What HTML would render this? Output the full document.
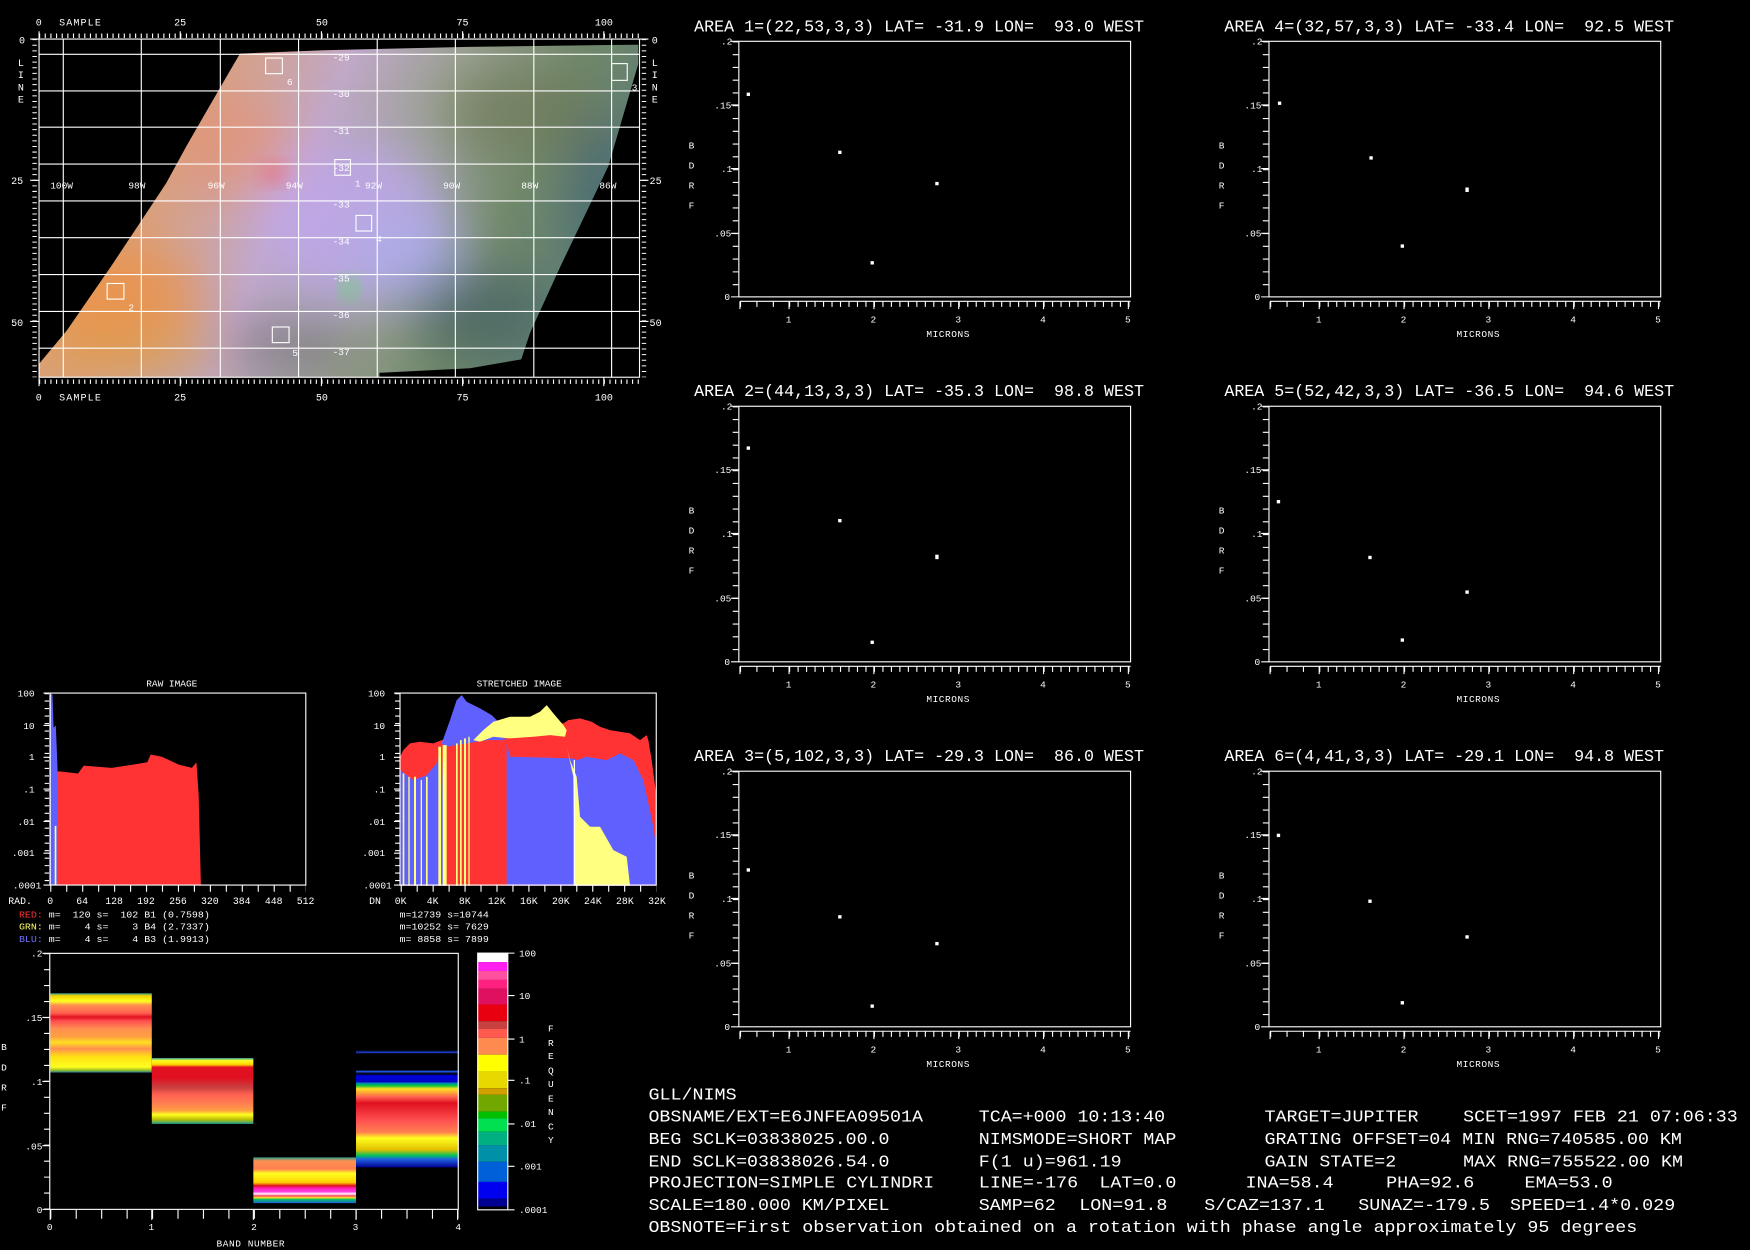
<!DOCTYPE html>
<html><head><meta charset="utf-8"><style>
html,body{margin:0;padding:0;background:#000;}
svg{display:block}
text{font-family:"Liberation Mono","DejaVu Sans Mono",monospace;fill:#fff;white-space:pre}
</style></head><body>
<svg width="1750" height="1250" viewBox="0 0 1568 1120" xmlns="http://www.w3.org/2000/svg">
<rect width="1568" height="1120" fill="#000"/>
<defs>
 <clipPath id="mapclip"><polygon points="35,338 35,326 60,296 100,238 149,164 167,131 197,79 215,48 290,45 420,42 572,40 572,57 545,149 502,239 475,298 467,322 421,330 340,334 340,338"/></clipPath>
 <filter id="bl" x="-30%" y="-30%" width="160%" height="160%"><feGaussianBlur stdDeviation="22"/></filter>
 <filter id="bl2" x="-30%" y="-30%" width="160%" height="160%"><feGaussianBlur stdDeviation="8"/></filter>
 <linearGradient id="mbase" x1="0" y1="0" x2="1" y2="0.25">
  <stop offset="0" stop-color="#e4a060"/><stop offset="0.3" stop-color="#d8a080"/>
  <stop offset="0.5" stop-color="#c0a8c8"/><stop offset="0.68" stop-color="#98a090"/>
  <stop offset="0.85" stop-color="#70886a"/><stop offset="1" stop-color="#607e74"/>
 </linearGradient>
 <linearGradient id="b0" x1="0" y1="0" x2="0" y2="1">
  <stop offset="0" stop-color="#30a090"/><stop offset="0.03" stop-color="#f0d000"/><stop offset="0.1" stop-color="#ffff20"/>
  <stop offset="0.15" stop-color="#ff9050"/><stop offset="0.25" stop-color="#ff6050"/><stop offset="0.3" stop-color="#e01020"/>
  <stop offset="0.35" stop-color="#ff5050"/><stop offset="0.45" stop-color="#ff9050"/><stop offset="0.55" stop-color="#ffa040"/>
  <stop offset="0.62" stop-color="#ffe020"/><stop offset="0.7" stop-color="#ff9050"/><stop offset="0.8" stop-color="#ffe010"/>
  <stop offset="0.93" stop-color="#ffff20"/><stop offset="0.97" stop-color="#a0c020"/><stop offset="1" stop-color="#2080a0"/>
 </linearGradient>
 <linearGradient id="b1" x1="0" y1="0" x2="0" y2="1">
  <stop offset="0" stop-color="#30a0a0"/><stop offset="0.04" stop-color="#ffff20"/><stop offset="0.1" stop-color="#ffd000"/>
  <stop offset="0.14" stop-color="#e01020"/><stop offset="0.3" stop-color="#e01020"/><stop offset="0.45" stop-color="#c84040"/>
  <stop offset="0.55" stop-color="#ff6050"/><stop offset="0.7" stop-color="#ff8050"/><stop offset="0.8" stop-color="#ffa040"/>
  <stop offset="0.86" stop-color="#ffff20"/><stop offset="0.93" stop-color="#c0c000"/><stop offset="1" stop-color="#20a090"/>
 </linearGradient>
 <linearGradient id="b2" x1="0" y1="0" x2="0" y2="1">
  <stop offset="0" stop-color="#20a090"/><stop offset="0.08" stop-color="#ff9050"/><stop offset="0.25" stop-color="#ff8050"/>
  <stop offset="0.35" stop-color="#ffff20"/><stop offset="0.55" stop-color="#ffd000"/><stop offset="0.62" stop-color="#e01020"/>
  <stop offset="0.68" stop-color="#ff20c0"/><stop offset="0.75" stop-color="#ff40e0"/><stop offset="0.8" stop-color="#ffffff"/>
  <stop offset="0.84" stop-color="#ff4060"/><stop offset="0.88" stop-color="#ffe020"/><stop offset="0.92" stop-color="#00c060"/>
  <stop offset="1" stop-color="#2060e0"/>
 </linearGradient>
 <linearGradient id="b3" x1="0" y1="0" x2="0" y2="1">
  <stop offset="0" stop-color="#000"/><stop offset="0.02" stop-color="#2040e0"/><stop offset="0.03" stop-color="#000"/>
  <stop offset="0.17" stop-color="#000"/><stop offset="0.18" stop-color="#2060ff"/><stop offset="0.2" stop-color="#000"/>
  <stop offset="0.22" stop-color="#0000e0"/><stop offset="0.27" stop-color="#0000c0"/><stop offset="0.28" stop-color="#0080c0"/>
  <stop offset="0.3" stop-color="#00c040"/><stop offset="0.33" stop-color="#ffe020"/><stop offset="0.4" stop-color="#ff6050"/>
  <stop offset="0.45" stop-color="#e01020"/><stop offset="0.6" stop-color="#ff5050"/><stop offset="0.7" stop-color="#ff8050"/>
  <stop offset="0.75" stop-color="#ffff20"/><stop offset="0.85" stop-color="#e0c000"/><stop offset="0.9" stop-color="#00c060"/>
  <stop offset="0.93" stop-color="#2060e0"/><stop offset="1" stop-color="#000090"/>
 </linearGradient>
 <g id="plotaxes" stroke="#fff" fill="none">
  <rect x="662" y="37" width="351" height="229"/>
  <line x1="659" y1="37" x2="659" y2="266" stroke-width="5" stroke-dasharray="1 10.45"/>
  <path d="M655 37H662M655 94H662M655 151H662M655 209H662M655 266H662"/>
  <line x1="663" y1="270" x2="1013" y2="270"/>
  <line x1="663" y1="272.5" x2="707" y2="272.5" stroke-width="5" stroke-dasharray="1 13.7"/>
  <line x1="707" y1="272.5" x2="1013" y2="272.5" stroke-width="5" stroke-dasharray="1 6.6"/>
  <path d="M663 270V277M707 270V277M783 270V277M859 270V277M935 270V277M1011 270V277"/>
 </g>
</defs>

<!-- MAP -->
<g clip-path="url(#mapclip)">
 <rect x="30" y="35" width="550" height="310" fill="url(#mbase)"/>
 <g filter="url(#bl)">
  <ellipse cx="320" cy="200" rx="85" ry="75" fill="#c0a8f0" opacity="0.8"/>
  <ellipse cx="370" cy="230" rx="50" ry="40" fill="#a8b0f0" opacity="0.6"/>
  <ellipse cx="110" cy="270" rx="70" ry="50" fill="#f0903c" opacity="0.7"/>
  <ellipse cx="210" cy="130" rx="55" ry="45" fill="#e89070" opacity="0.6"/>
  <ellipse cx="470" cy="100" rx="70" ry="40" fill="#707a58" opacity="0.7"/>
  <ellipse cx="430" cy="280" rx="60" ry="40" fill="#3a5a60" opacity="0.6"/>
  <ellipse cx="260" cy="310" rx="60" ry="25" fill="#6a6070" opacity="0.5"/>
  <ellipse cx="120" cy="320" rx="80" ry="20" fill="#d8a040" opacity="0.6"/>
  <ellipse cx="540" cy="170" rx="30" ry="70" fill="#3a6070" opacity="0.6"/>
 </g>
 <ellipse cx="313" cy="258" rx="8" ry="10" fill="#60e060" opacity="0.7" filter="url(#bl2)"/>
 <ellipse cx="245" cy="155" rx="12" ry="10" fill="#f06060" opacity="0.5" filter="url(#bl2)"/>
</g>
<!-- map grid -->
<g stroke="#fff" stroke-width="1" fill="none">
 <rect x="35" y="35" width="538" height="303"/>
 <path d="M56.7 35V338M126.6 35V338M197.4 35V338M267.5 35V338M338 35V338M408 35V338M478.3 35V338M548 35V338"/>
 <path d="M35 48.7H573M35 81.5H573M35 114H573M35 147H573M35 180H573M35 213H573M35 246H573M35 279H573M35 312H573"/>
 <line x1="35" y1="32" x2="573" y2="32" stroke-width="4" stroke-dasharray="1 4.06"/>
 <line x1="35" y1="342" x2="573" y2="342" stroke-width="4" stroke-dasharray="1 4.06"/>
 <line x1="31" y1="35" x2="31" y2="338" stroke-width="4" stroke-dasharray="1 4.04"/>
 <line x1="577" y1="35" x2="577" y2="338" stroke-width="4" stroke-dasharray="1 4.04"/>
 <path d="M35 28V35M161.5 28V35M288 28V35M414.5 28V35M541 28V35M35 338V346M161.5 338V346M288 338V346M414.5 338V346M541 338V346M27 35H35M27 161.6H35M27 288H35M573 35H581M573 161.6H581M573 288H581"/>
 <rect x="238" y="52" width="15" height="14"/><rect x="548" y="57" width="14" height="15"/>
 <rect x="300" y="143" width="14" height="14"/><rect x="319" y="193" width="14" height="14"/>
 <rect x="96" y="254" width="15" height="14"/><rect x="244" y="293" width="15" height="14"/>
</g>
<g font-size="9">
 <text x="32" y="23">0</text><text x="53" y="23" letter-spacing="1">SAMPLE</text>
 <text x="156" y="23">25</text><text x="283" y="23">50</text><text x="409" y="23">75</text><text x="533" y="23">100</text>
 <text x="32" y="359">0</text><text x="53" y="359" letter-spacing="1">SAMPLE</text>
 <text x="156" y="359">25</text><text x="283" y="359">50</text><text x="409" y="359">75</text><text x="533" y="359">100</text>
 <text x="17" y="39">0</text><text x="16" y="59">L</text><text x="16" y="70">I</text><text x="16" y="81">N</text><text x="16" y="92">E</text>
 <text x="10" y="165">25</text><text x="10" y="292">50</text>
 <text x="584" y="39">0</text><text x="584" y="59">L</text><text x="584" y="70">I</text><text x="584" y="81">N</text><text x="584" y="92">E</text>
 <text x="582" y="165">25</text><text x="582" y="292">50</text>
</g>
<g font-size="8.5" fill="#fff">
 <text x="45" y="169">100W</text><text x="115" y="169">98W</text><text x="186" y="169">96W</text><text x="256" y="169">94W</text>
 <text x="327" y="169">92W</text><text x="397" y="169">90W</text><text x="467" y="169">88W</text><text x="537" y="169">86W</text>
 <text x="298" y="54">-29</text><text x="298" y="87">-30</text><text x="298" y="120">-31</text><text x="298" y="153">-32</text>
 <text x="298" y="186">-33</text><text x="298" y="219">-34</text><text x="298" y="252">-35</text><text x="298" y="285">-36</text><text x="298" y="318">-37</text>
 <text x="257" y="76">6</text><text x="566" y="81">3</text><text x="318" y="167">1</text><text x="337" y="217">4</text>
 <text x="115" y="278">2</text><text x="262" y="319">5</text>
</g>

<!-- PLOTS -->
<g>
 <use href="#plotaxes"/>
 <text x="622" y="28" font-size="14.5" textLength="403" lengthAdjust="spacingAndGlyphs">AREA 1=(22,53,3,3) LAT= -31.9 LON=  93.0 WEST</text>
 <g font-size="8.5"><text x="646" y="40">.2</text><text x="640" y="97">.15</text><text x="646" y="154">.1</text><text x="640" y="212">.05</text><text x="649" y="269">0</text>
 <text x="704" y="289">1</text><text x="780" y="289">2</text><text x="856" y="289">3</text><text x="932" y="289">4</text><text x="1008" y="289">5</text>
 <text x="830" y="302" letter-spacing="0.5">MICRONS</text>
 <text x="617" y="133">B</text><text x="617" y="151">D</text><text x="617" y="169">R</text><text x="617" y="187">F</text></g>
 <g fill="#fff"><rect x="669" y="83" width="3" height="3"/><rect x="751" y="135" width="3" height="3"/><rect x="780" y="234" width="3" height="3"/><rect x="838" y="163" width="3" height="3"/></g>
</g>
<g transform="translate(475,0)">
 <use href="#plotaxes"/>
 <text x="622" y="28" font-size="14.5" textLength="403" lengthAdjust="spacingAndGlyphs">AREA 4=(32,57,3,3) LAT= -33.4 LON=  92.5 WEST</text>
 <g font-size="8.5"><text x="646" y="40">.2</text><text x="640" y="97">.15</text><text x="646" y="154">.1</text><text x="640" y="212">.05</text><text x="649" y="269">0</text>
 <text x="704" y="289">1</text><text x="780" y="289">2</text><text x="856" y="289">3</text><text x="932" y="289">4</text><text x="1008" y="289">5</text>
 <text x="830" y="302" letter-spacing="0.5">MICRONS</text>
 <text x="617" y="133">B</text><text x="617" y="151">D</text><text x="617" y="169">R</text><text x="617" y="187">F</text></g>
 <g fill="#fff"><rect x="670" y="91" width="3" height="3"/><rect x="752" y="140" width="3" height="3"/><rect x="780" y="219" width="3" height="3"/><rect x="838" y="168" width="3" height="4"/></g>
</g>
<g transform="translate(0,327)">
 <use href="#plotaxes"/>
 <text x="622" y="28" font-size="14.5" textLength="403" lengthAdjust="spacingAndGlyphs">AREA 2=(44,13,3,3) LAT= -35.3 LON=  98.8 WEST</text>
 <g font-size="8.5"><text x="646" y="40">.2</text><text x="640" y="97">.15</text><text x="646" y="154">.1</text><text x="640" y="212">.05</text><text x="649" y="269">0</text>
 <text x="704" y="289">1</text><text x="780" y="289">2</text><text x="856" y="289">3</text><text x="932" y="289">4</text><text x="1008" y="289">5</text>
 <text x="830" y="302" letter-spacing="0.5">MICRONS</text>
 <text x="617" y="133">B</text><text x="617" y="151">D</text><text x="617" y="169">R</text><text x="617" y="187">F</text></g>
 <g fill="#fff"><rect x="669" y="73" width="3" height="3"/><rect x="751" y="138" width="3" height="3"/><rect x="780" y="247" width="3" height="3"/><rect x="838" y="170" width="3" height="4"/></g>
</g>
<g transform="translate(475,327)">
 <use href="#plotaxes"/>
 <text x="622" y="28" font-size="14.5" textLength="403" lengthAdjust="spacingAndGlyphs">AREA 5=(52,42,3,3) LAT= -36.5 LON=  94.6 WEST</text>
 <g font-size="8.5"><text x="646" y="40">.2</text><text x="640" y="97">.15</text><text x="646" y="154">.1</text><text x="640" y="212">.05</text><text x="649" y="269">0</text>
 <text x="704" y="289">1</text><text x="780" y="289">2</text><text x="856" y="289">3</text><text x="932" y="289">4</text><text x="1008" y="289">5</text>
 <text x="830" y="302" letter-spacing="0.5">MICRONS</text>
 <text x="617" y="133">B</text><text x="617" y="151">D</text><text x="617" y="169">R</text><text x="617" y="187">F</text></g>
 <g fill="#fff"><rect x="669" y="121" width="3" height="3"/><rect x="751" y="171" width="3" height="3"/><rect x="780" y="245" width="3" height="3"/><rect x="838" y="202" width="3" height="3"/></g>
</g>
<g transform="translate(0,654)">
 <use href="#plotaxes"/>
 <text x="622" y="28" font-size="14.5" textLength="403" lengthAdjust="spacingAndGlyphs">AREA 3=(5,102,3,3) LAT= -29.3 LON=  86.0 WEST</text>
 <g font-size="8.5"><text x="646" y="40">.2</text><text x="640" y="97">.15</text><text x="646" y="154">.1</text><text x="640" y="212">.05</text><text x="649" y="269">0</text>
 <text x="704" y="289">1</text><text x="780" y="289">2</text><text x="856" y="289">3</text><text x="932" y="289">4</text><text x="1008" y="289">5</text>
 <text x="830" y="302" letter-spacing="0.5">MICRONS</text>
 <text x="617" y="133">B</text><text x="617" y="151">D</text><text x="617" y="169">R</text><text x="617" y="187">F</text></g>
 <g fill="#fff"><rect x="669" y="124" width="3" height="3"/><rect x="751" y="166" width="3" height="3"/><rect x="780" y="246" width="3" height="3"/><rect x="838" y="190" width="3" height="3"/></g>
</g>
<g transform="translate(475,654)">
 <use href="#plotaxes"/>
 <text x="622" y="28" font-size="14.5" textLength="394" lengthAdjust="spacingAndGlyphs">AREA 6=(4,41,3,3) LAT= -29.1 LON=  94.8 WEST</text>
 <g font-size="8.5"><text x="646" y="40">.2</text><text x="640" y="97">.15</text><text x="646" y="154">.1</text><text x="640" y="212">.05</text><text x="649" y="269">0</text>
 <text x="704" y="289">1</text><text x="780" y="289">2</text><text x="856" y="289">3</text><text x="932" y="289">4</text><text x="1008" y="289">5</text>
 <text x="830" y="302" letter-spacing="0.5">MICRONS</text>
 <text x="617" y="133">B</text><text x="617" y="151">D</text><text x="617" y="169">R</text><text x="617" y="187">F</text></g>
 <g fill="#fff"><rect x="669" y="93" width="3" height="3"/><rect x="751" y="152" width="3" height="3"/><rect x="780" y="243" width="3" height="3"/><rect x="838" y="184" width="3" height="3"/></g>
</g>

<!-- HISTOGRAMS -->
<g font-size="8.5">
 <text x="131" y="615">RAW IMAGE</text>
 <text x="427" y="615">STRETCHED IMAGE</text>
</g>
<polygon fill="#ff3333" points="48,700 52,691 70,693 75,686 100,688 120,685 132,683 135,676 145,678 160,685 172,688 176,683 178,712 180,793 48,793"/>
<polygon fill="#6060ff" points="44,793 44,622 47,622 48,652 50,650 52,700 52,793"/>
<rect x="49" y="740" width="1.5" height="53" fill="#ffff80"/>
<g transform="translate(358.4,621.3) scale(0.2987)">
 <polygon fill="#ff3333" points="0,190 10,170 30,150 60,145 100,150 125,140 180,130 230,125 300,120 330,85 400,80 490,90 505,80 540,75 575,85 600,100 630,110 690,120 720,140 740,125 745,140 755,200 768,300 768,577 0,577"/>
 <polygon fill="#6060ff" points="0,230 40,260 80,245 110,210 125,150 135,577 0,577"/>
 <polygon fill="#6060ff" points="125,150 150,80 170,20 185,5 200,25 240,45 275,65 300,90 315,140 260,140 200,150 140,160"/>
 <polygon fill="#6060ff" points="320,150 330,190 520,195 530,200 560,190 620,200 660,180 700,200 730,260 760,400 768,460 768,577 320,577"/>
 <polygon fill="#ffff80" points="220,140 250,110 280,85 330,70 390,70 420,55 440,35 460,60 490,95 500,110 495,130 450,125 400,130 330,135 280,130 240,145"/>
 <polygon fill="#ffff80" points="500,160 510,200 530,250 540,370 570,400 600,400 640,470 680,490 690,577 525,577 520,250"/>
 <g fill="#ffff80"><rect x="8" y="240" width="5" height="337"/><rect x="25" y="250" width="4" height="327"/><rect x="42" y="250" width="6" height="327"/><rect x="62" y="260" width="4" height="317"/><rect x="78" y="250" width="5" height="327"/><rect x="115" y="160" width="8" height="417"/><rect x="128" y="155" width="12" height="422"/><rect x="168" y="150" width="5" height="427"/><rect x="180" y="140" width="5" height="437"/><rect x="192" y="135" width="6" height="442"/><rect x="205" y="130" width="4" height="447"/></g>
 <rect x="521" y="200" width="4" height="377" fill="#fff"/>
</g>
<g stroke="#fff" fill="none">
 <path d="M45 621H274V793H45Z"/><path d="M358.4 621H588V793H358.4Z"/>
 <path d="M39 621H45M39 650H45M39 678.5H45M39 707H45M39 736H45M39 764.5H45M39 793H45"/>
 <path d="M353 621H359M353 650H359M353 678.5H359M353 707H359M353 736H359M353 764.5H359M353 793H359"/>
 <line x1="45" y1="796" x2="274" y2="796" stroke-width="6" stroke-dasharray="1 13.3"/>
 <line x1="359" y1="796" x2="588" y2="796" stroke-width="6" stroke-dasharray="1 13.3"/>
 <line x1="42" y1="621" x2="42" y2="793" stroke-width="4" stroke-dasharray="1 5.7"/>
 <line x1="356" y1="621" x2="356" y2="793" stroke-width="4" stroke-dasharray="1 5.7"/>
</g>
<g font-size="8.5">
 <text x="31" y="624" text-anchor="end">100</text><text x="31" y="653" text-anchor="end">10</text><text x="31" y="681" text-anchor="end">1</text><text x="31" y="710" text-anchor="end">.1</text><text x="31" y="739" text-anchor="end">.01</text><text x="31" y="767" text-anchor="end">.001</text><text x="37" y="796" text-anchor="end">.0001</text>
 <text x="345" y="624" text-anchor="end">100</text><text x="345" y="653" text-anchor="end">10</text><text x="345" y="681" text-anchor="end">1</text><text x="345" y="710" text-anchor="end">.1</text><text x="345" y="739" text-anchor="end">.01</text><text x="345" y="767" text-anchor="end">.001</text><text x="351" y="796" text-anchor="end">.0001</text>
</g>
<g font-size="8.8" text-anchor="middle">
 <text x="18" y="810">RAD.</text><text x="45" y="810">0</text><text x="73.6" y="810">64</text><text x="102.2" y="810">128</text><text x="130.8" y="810">192</text><text x="159.4" y="810">256</text><text x="188" y="810">320</text><text x="216.6" y="810">384</text><text x="245.2" y="810">448</text><text x="273.8" y="810">512</text>
 <text x="336" y="810">DN</text><text x="359" y="810">0K</text><text x="387.7" y="810">4K</text><text x="416.4" y="810">8K</text><text x="445.1" y="810">12K</text><text x="473.8" y="810">16K</text><text x="502.5" y="810">20K</text><text x="531.2" y="810">24K</text><text x="559.9" y="810">28K</text><text x="588.6" y="810">32K</text>
</g>
<g font-size="8.3">
 <text x="17" y="822" textLength="171" lengthAdjust="spacingAndGlyphs"><tspan fill="#ff3030">RED:</tspan> m=  120 s=  102 B1 (0.7598)</text>
 <text x="17" y="833" textLength="171" lengthAdjust="spacingAndGlyphs"><tspan fill="#ffff60">GRN:</tspan> m=    4 s=    3 B4 (2.7337)</text>
 <text x="17" y="844" textLength="171" lengthAdjust="spacingAndGlyphs"><tspan fill="#7070ff">BLU:</tspan> m=    4 s=    4 B3 (1.9913)</text>
 <text x="358" y="822" textLength="80" lengthAdjust="spacingAndGlyphs">m=12739 s=10744</text>
 <text x="358" y="833" textLength="80" lengthAdjust="spacingAndGlyphs">m=10252 s= 7629</text>
 <text x="358" y="844" textLength="80" lengthAdjust="spacingAndGlyphs">m= 8858 s= 7899</text>
</g>

<!-- BAND PLOT -->
<rect x="45" y="890" width="91" height="71" fill="url(#b0)"/>
<rect x="136" y="948" width="91" height="59" fill="url(#b1)"/>
<rect x="227" y="1037" width="92" height="41" fill="url(#b2)"/>
<rect x="319" y="941" width="92" height="105" fill="url(#b3)"/>
<g stroke="#fff" fill="none">
 <rect x="44.6" y="854.2" width="366" height="229.4"/>
 <line x1="42" y1="854" x2="42" y2="1084" stroke-width="5" stroke-dasharray="1 13.3"/>
 <path d="M38 854.2H45M38 911.6H45M38 969H45M38 1026.5H45M38 1083.6H45"/>
 <line x1="45" y1="1088" x2="411" y2="1088" stroke-width="8" stroke-dasharray="1 21.8"/>
 <path d="M45 1084V1093M136 1084V1093M227 1084V1093M319 1084V1093M410 1084V1093"/>
</g>
<g font-size="8.5">
 <text x="38" y="857" text-anchor="end">.2</text><text x="38" y="915" text-anchor="end">.15</text><text x="38" y="972" text-anchor="end">.1</text><text x="38" y="1030" text-anchor="end">.05</text><text x="38" y="1087" text-anchor="end">0</text>
 <text x="1" y="941">B</text><text x="1" y="959">D</text><text x="1" y="977">R</text><text x="1" y="995">F</text>
 <text x="42" y="1102">0</text><text x="133" y="1102">1</text><text x="225" y="1102">2</text><text x="316" y="1102">3</text><text x="408" y="1102">4</text>
 <text x="194" y="1117" letter-spacing="0.5">BAND NUMBER</text>
</g>
<g>
 <rect x="428" y="854" width="27" height="8" fill="#ffffff"/>
 <rect x="428" y="862" width="27" height="8" fill="#ff20f0"/>
 <rect x="428" y="870" width="27" height="8" fill="#ff50a0"/>
 <rect x="428" y="878" width="27" height="8" fill="#ff2080"/>
 <rect x="428" y="886" width="27" height="14" fill="#e01060"/>
 <rect x="428" y="900" width="27" height="15" fill="#e80010"/>
 <rect x="428" y="915" width="27" height="7" fill="#c84040"/>
 <rect x="428" y="922" width="27" height="8" fill="#ff5a50"/>
 <rect x="428" y="930" width="27" height="15" fill="#ff8a50"/>
 <rect x="428" y="945" width="27" height="15" fill="#ffff00"/>
 <rect x="428" y="960" width="27" height="15" fill="#e8d800"/>
 <rect x="428" y="975" width="27" height="6" fill="#d0a000"/>
 <rect x="428" y="981" width="27" height="15" fill="#70a800"/>
 <rect x="428" y="996" width="27" height="6" fill="#00c000"/>
 <rect x="428" y="1002" width="27" height="12" fill="#00e050"/>
 <rect x="428" y="1014" width="27" height="12" fill="#00b080"/>
 <rect x="428" y="1026" width="27" height="15" fill="#0090a8"/>
 <rect x="428" y="1041" width="27" height="18" fill="#0060d8"/>
 <rect x="428" y="1059" width="27" height="15" fill="#0000f0"/>
 <rect x="428" y="1074" width="27" height="7" fill="#000090"/>
 <rect x="428" y="854" width="27" height="230" fill="none" stroke="#fff"/>
 <path d="M455 854H461M455 892H461M455 931H461M455 968H461M455 1007H461M455 1045H461M455 1084H461" stroke="#fff"/>
</g>
<g font-size="8.5">
 <text x="465" y="857">100</text><text x="465" y="895">10</text><text x="465" y="934">1</text><text x="465" y="971">.1</text><text x="465" y="1010">.01</text><text x="465" y="1048">.001</text><text x="465" y="1087">.0001</text>
 <text x="491" y="924">F</text><text x="491" y="937">R</text><text x="491" y="949">E</text><text x="491" y="962">Q</text><text x="491" y="974">U</text><text x="491" y="987">E</text><text x="491" y="999">N</text><text x="491" y="1012">C</text><text x="491" y="1024">Y</text>
</g>

<!-- INFO TEXT -->
<g font-size="14.6">
 <text x="581" y="985" textLength="79" lengthAdjust="spacingAndGlyphs">GLL/NIMS</text>
 <text x="581" y="1005" textLength="246" lengthAdjust="spacingAndGlyphs">OBSNAME/EXT=E6JNFEA09501A</text><text x="877" y="1005" textLength="167" lengthAdjust="spacingAndGlyphs">TCA=+000 10:13:40</text><text x="1133" y="1005" textLength="138" lengthAdjust="spacingAndGlyphs">TARGET=JUPITER</text><text x="1311" y="1005" textLength="246" lengthAdjust="spacingAndGlyphs">SCET=1997 FEB 21 07:06:33</text>
 <text x="581" y="1025" textLength="216" lengthAdjust="spacingAndGlyphs">BEG SCLK=03838025.00.0</text><text x="877" y="1025" textLength="177" lengthAdjust="spacingAndGlyphs">NIMSMODE=SHORT MAP</text><text x="1133" y="1025" textLength="374" lengthAdjust="spacingAndGlyphs">GRATING OFFSET=04 MIN RNG=740585.00 KM</text>
 <text x="581" y="1045" textLength="216" lengthAdjust="spacingAndGlyphs">END SCLK=03838026.54.0</text><text x="877" y="1045" textLength="128" lengthAdjust="spacingAndGlyphs">F(1 u)=961.19</text><text x="1133" y="1045" textLength="118" lengthAdjust="spacingAndGlyphs">GAIN STATE=2</text><text x="1311" y="1045" textLength="197" lengthAdjust="spacingAndGlyphs">MAX RNG=755522.00 KM</text>
 <text x="581" y="1064" textLength="256" lengthAdjust="spacingAndGlyphs">PROJECTION=SIMPLE CYLINDRI</text><text x="877" y="1064" textLength="89" lengthAdjust="spacingAndGlyphs">LINE=-176</text><text x="985" y="1064" textLength="69" lengthAdjust="spacingAndGlyphs">LAT=0.0</text><text x="1116" y="1064" textLength="79" lengthAdjust="spacingAndGlyphs">INA=58.4</text><text x="1242" y="1064" textLength="79" lengthAdjust="spacingAndGlyphs">PHA=92.6</text><text x="1366" y="1064" textLength="79" lengthAdjust="spacingAndGlyphs">EMA=53.0</text>
 <text x="581" y="1084" textLength="216" lengthAdjust="spacingAndGlyphs">SCALE=180.000 KM/PIXEL</text><text x="877" y="1084" textLength="69" lengthAdjust="spacingAndGlyphs">SAMP=62</text><text x="967" y="1084" textLength="79" lengthAdjust="spacingAndGlyphs">LON=91.8</text><text x="1079" y="1084" textLength="108" lengthAdjust="spacingAndGlyphs">S/CAZ=137.1</text><text x="1217" y="1084" textLength="118" lengthAdjust="spacingAndGlyphs">SUNAZ=-179.5</text><text x="1353" y="1084" textLength="148" lengthAdjust="spacingAndGlyphs">SPEED=1.4*0.029</text>
 <text x="581" y="1104" textLength="886" lengthAdjust="spacingAndGlyphs">OBSNOTE=First observation obtained on a rotation with phase angle approximately 95 degrees</text>
</g>
</svg>
</body></html>
